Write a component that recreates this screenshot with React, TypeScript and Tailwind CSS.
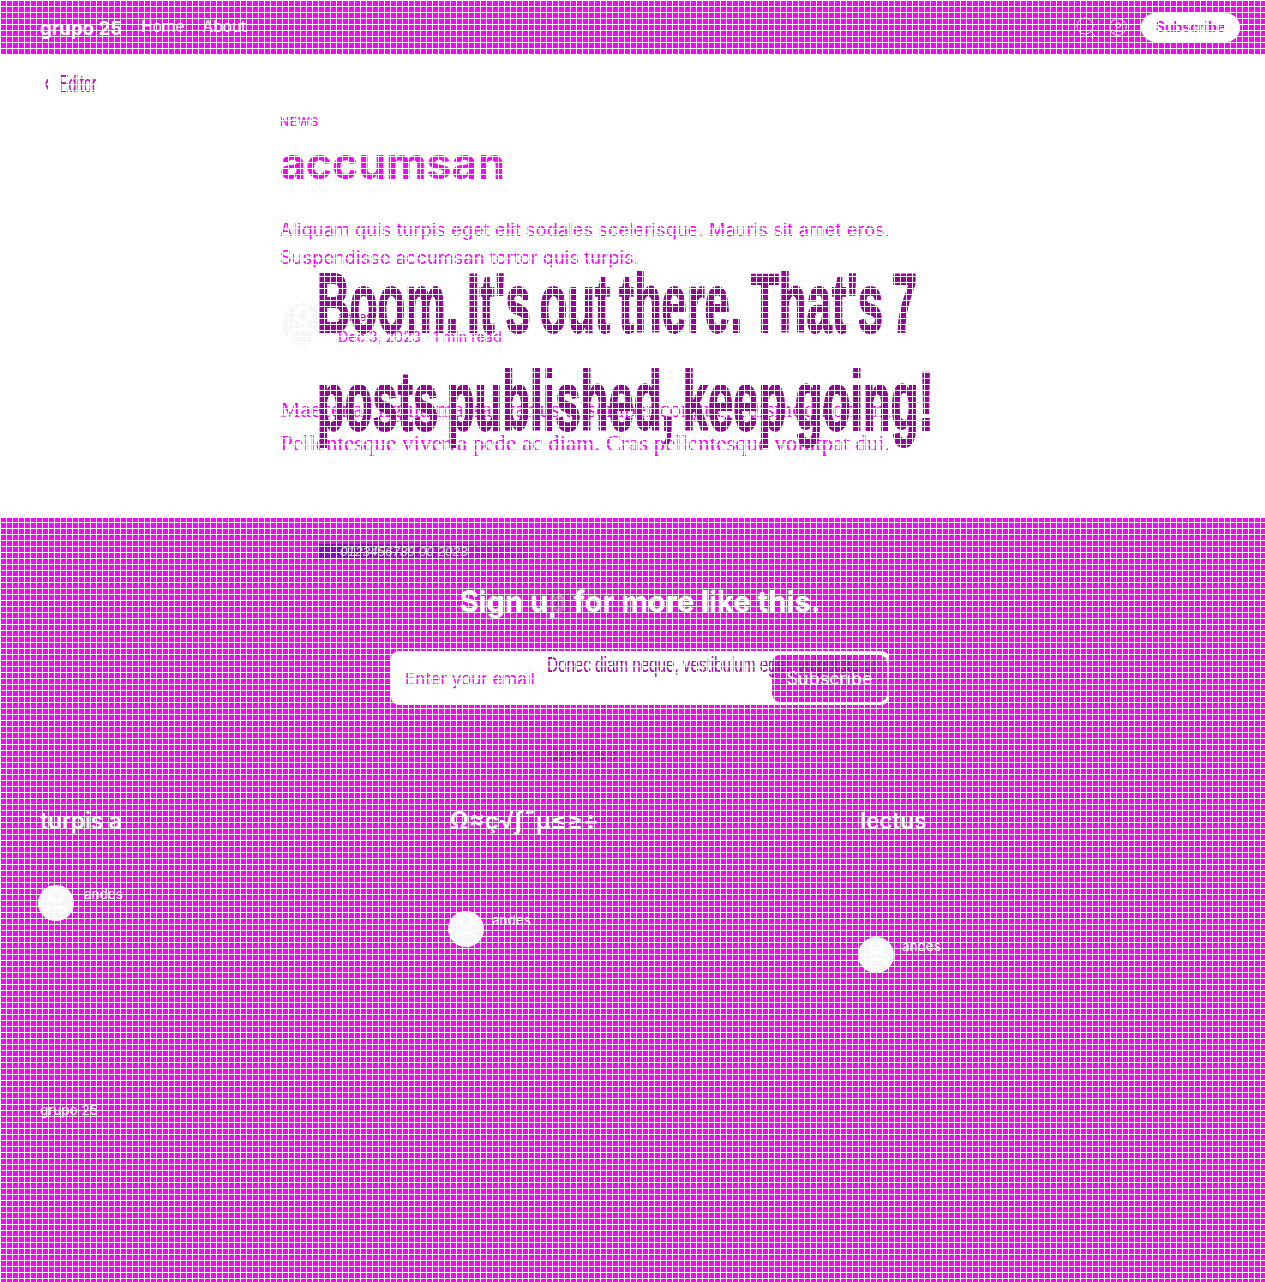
import React from "react";
import { Search, UserCircle, ChevronLeft, User } from "lucide-react";

const sans = "font-['Inter','Noto_Sans',sans-serif]";

function Avatar({ className }: { className: string }) {
  return (
    <div className={`rounded-full bg-[#f3f5f8] flex items-center justify-center overflow-hidden shrink-0 ${className}`}>
      <User className="w-full h-full text-white" strokeWidth={2} />
    </div>
  );
}

function FooterCol({ title, offset, size, gap }: { title: string; offset: string; size: string; gap: string }) {
  return (
    <div>
      <h3 className={`${size} font-semibold text-white leading-7`}>{title}</h3>
      <div className={`flex items-start ${gap} ${offset}`}>
        <Avatar className="w-9 h-9 -ml-[2px]" />
        <span className="text-[13.5px] text-white leading-4 mt-[1px]">andes</span>
      </div>
    </div>
  );
}

export default function App() {
  return (
    <div className={`relative w-[1265px] h-[1282px] overflow-hidden bg-white text-[#ff00ff] ${sans}`}>
      <div className="w-[1280px]">
        <header className="h-[54px] bg-[#ff00ff] flex items-center px-10 text-white">
          <span className="text-[18.6px] font-bold mt-[3px]">grupo 25</span>
          <nav className="flex gap-[18px] ml-[19px] text-[15.5px]">
            <span>Home</span>
            <span>About</span>
          </nav>
          <div className="ml-auto flex items-center">
            <Search className="w-6 h-6 mr-[10px]" strokeWidth={1} />
            <UserCircle className="w-5 h-5 mr-[13px]" strokeWidth={1} />
            <button className="h-[29px] w-[99px] rounded-full bg-white text-[#ff00ff] text-sm font-bold">Subscribe</button>
          </div>
        </header>

        <div className="h-[60px] pl-10 flex items-center text-[#c000c0]">
          <ChevronLeft className="w-5 h-5 -ml-[3px] scale-x-50" strokeWidth={3} />
          <span className="text-2xl font-['Liberation_Sans',sans-serif] origin-left scale-x-[.6] ml-[2px]">Editor</span>
        </div>

        <article className="w-[720px] mx-auto">
          <div className="text-xs font-medium tracking-[0.06em] uppercase leading-4">News</div>
          <h1 className="text-[44.5px] leading-[52px] font-bold mt-[7px]">accumsan</h1>
          <p className="text-lg leading-7 mt-[27px] w-[630px] tracking-[0.17px]">
            Aliquam quis turpis eget elit sodales scelerisque. Mauris sit amet eros. Suspendisse accumsan tortor quis turpis.
          </p>
          <div className="flex items-center gap-[14px] mt-[29px] h-[52px]">
            <Avatar className="w-[42px] h-[42px] ml-[2px] -mt-[6px]" />
            <div>
              <div className="text-xs leading-5 text-[#c000c0]">andes</div>
              <div className="text-[14.3px] leading-5">Dec 3, 2023 · 1 min read</div>
            </div>
          </div>
          <div className="font-['Liberation_Serif',serif] text-[23px] leading-[34px] mt-[40px] w-[640px] whitespace-nowrap">
            <p>Maecenas ligula massa, varius a, semper congue, euismod non, mi.</p>
            <p>Pellentesque viverra pede ac diam. Cras pellentesque volutpat dui.</p>
          </div>
        </article>

        <section className="absolute top-[518px] left-0 w-[1280px] bottom-0 bg-[#ff00ff]">
          <h2 className="text-[29.2px] leading-9 font-bold text-white text-center mt-[66px]">Sign up for more like this.</h2>
          <form className="w-[498px] h-[54px] mx-auto mt-[31px] bg-white rounded-lg flex items-center justify-between pl-[14px] pr-[2px]">
            <span className="text-[17px] mt-[3px]">Enter your email</span>
            <button className="w-[115px] h-[47px] rounded-lg bg-[#ff00ff] text-white text-[18px]">Subscribe</button>
          </form>
          <p className="ml-[548px] text-sm leading-5 text-[#b000b0] mt-[40px]">Quam 16 s</p>

          <div className="grid grid-cols-[390px_390px_390px] gap-x-5 pl-10 mt-[42px]">
            <FooterCol title="turpis a" offset="mt-[50px]" size="text-[22.5px]" gap="gap-[10px]" />
            <FooterCol title="Ω≈ç√∫˜µ≤≥÷" offset="mt-[76px]" size="text-[24px]" gap="gap-[8px]" />
            <FooterCol title="lectus" offset="mt-[102px]" size="text-[22.5px]" gap="gap-[8px]" />
          </div>
          <p className="text-[13.5px] leading-4 text-white pl-10 mt-[129px]">grupo 25</p>
        </section>
      </div>

      <div className="absolute left-[317px] top-[254px] w-[1400px] origin-top-left scale-x-[.541] [word-spacing:-7.4px] font-['Liberation_Sans',sans-serif] font-bold text-[84px] leading-[98px] text-[#990099] [-webkit-text-stroke:2px_#990099]">
        Boom. It's out there. That's 7<br />posts published, keep going!
      </div>
      <div className="absolute left-[547px] top-[651px] w-[490px] overflow-hidden origin-top-left scale-x-[.69] font-['Liberation_Sans',sans-serif] text-[22px] leading-7 text-[#a000a0] whitespace-nowrap">
        Donec diam neque, vestibulum eget, vulputate ut
      </div>
      <div className="absolute left-[318px] top-[544px] w-[212px] h-[15px] bg-[linear-gradient(to_right,#8800cc,#ee00ee)] flex items-center pl-[22px] text-[#d4d4d4] text-[13.5px] italic leading-3 font-['Liberation_Sans',sans-serif] whitespace-nowrap">
        0123456789 00 2023
      </div>
      <div className="absolute left-[548px] top-[592px] w-[20px] h-[20px] bg-[#d800d8]/70 text-[6px] leading-[8px] text-[#e5e5e5] text-center">
        ¬ ∂ç
      </div>

      <div className="absolute inset-0 pointer-events-none bg-[linear-gradient(to_right,#fff_1px,transparent_1px),linear-gradient(to_bottom,#fff_1px,transparent_1px)] bg-[size:6px_6px]" />
    </div>
  );
}
